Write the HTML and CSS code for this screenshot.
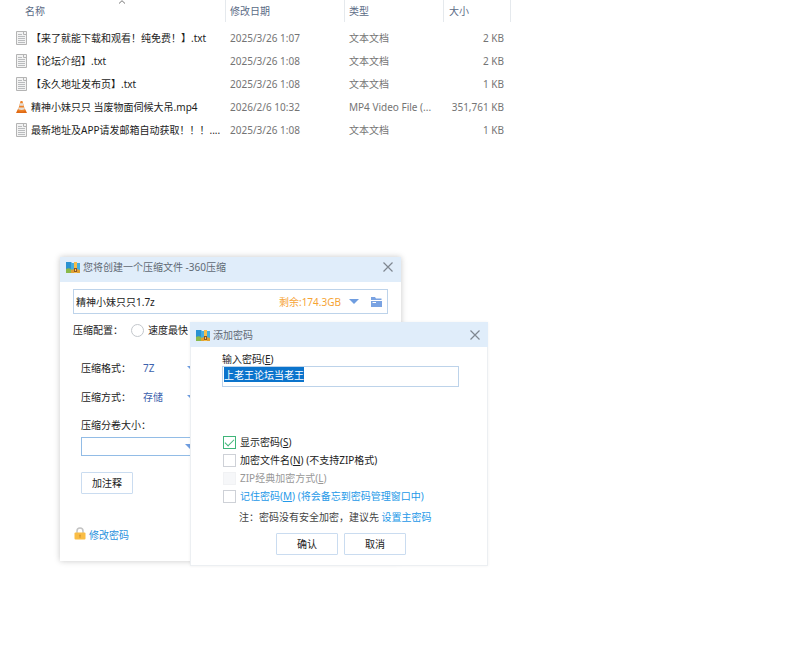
FILE: index.html
```html
<!DOCTYPE html>
<html lang="zh-CN">
<head>
<meta charset="utf-8">
<meta name="viewport" content="width=device-width, initial-scale=1">
<title>360压缩</title>
<link rel="stylesheet" href="styles.css">
</head>
<body>
<svg class="defs" aria-hidden="true">
  <symbol id="doc" viewBox="0 0 11 14">
    <path d="M.5 .5H10.500V13.500H.5Z" fill="#f3f3f3" stroke="#b4b4b4"/>
    <path d="M7.500 .5V3.500H10.500" fill="none" stroke="#b4b4b4"/>
    <path d="M2 3.500H6M2 5.500H9M2 7.500H9M2 9.500H9M2 11.500H9" stroke="#b9bbbd"/>
  </symbol>
  <symbol id="cone" viewBox="0 0 12 14">
    <path d="M2 9.500H10L12 13.500H0Z" fill="#e06a14"/>
    <path d="M5 .5H7L10 11Q6 13 2 11Z" fill="#ee8228"/>
    <path d="M4.400 3H7.600L8.300 5.500H3.700ZM3 7.500H9L9.500 9.500Q6 11 2.500 9.500Z" fill="#e3dfda"/>
  </symbol>
  <symbol id="zip" viewBox="0 0 14 12">
    <path d="M0 1H5L6 2H9V12H0Z" fill="#2a92d2"/>
    <path d="M0 8Q3 6 7 9V12H0Z" fill="#8ab94a"/>
    <path d="M5 2H14V12H5Z" fill="#45aee0"/>
    <path d="M5 9Q9 7 14 9V12H5Z" fill="#e0a132"/>
    <path d="M8 1H11V12H8Z" fill="#f5bd4a"/>
    <path d="M8 7H11V11H8Z" fill="#8e5424"/>
    <path d="M9 8H10V10H9Z" fill="#f3cf70"/>
  </symbol>
  <symbol id="close" viewBox="0 0 10 10">
    <path d="M.5 .5L9.500 9.500M9.500 .5L.5 9.500" fill="none" stroke="#7f8790" stroke-width="1.200"/>
  </symbol>
</svg>

<main class="desktop">
  <table class="files">
    <colgroup><col class="c-name"><col class="c-date"><col class="c-type"><col class="c-size"></colgroup>
    <thead>
      <tr>
        <th class="sorted">名称<svg class="sort" viewBox="0 0 8 4"><path d="M1 3.500L4 .7L7 3.500" fill="none" stroke="#777"/></svg></th>
        <th>修改日期</th><th>类型</th><th>大小</th>
      </tr>
    </thead>
    <tbody>
      <tr><td><span class="file"><svg><use href="#doc"/></svg>【来了就能下载和观看！纯免费！】.txt</span></td><td>2025/3/26 1:07</td><td>文本文档</td><td>2 KB</td></tr>
      <tr><td><span class="file"><svg><use href="#doc"/></svg>【论坛介绍】.txt</span></td><td>2025/3/26 1:08</td><td>文本文档</td><td>2 KB</td></tr>
      <tr><td><span class="file"><svg><use href="#doc"/></svg>【永久地址发布页】.txt</span></td><td>2025/3/26 1:08</td><td>文本文档</td><td>1 KB</td></tr>
      <tr><td><span class="file"><svg><use href="#cone"/></svg>精神小妹只只 当废物面伺候大吊.mp4</span></td><td>2026/2/6 10:32</td><td>MP4 Video File (...</td><td>351,761 KB</td></tr>
      <tr><td><span class="file"><svg><use href="#doc"/></svg>最新地址及APP请发邮箱自动获取！！！....</span></td><td>2025/3/26 1:08</td><td>文本文档</td><td>1 KB</td></tr>
    </tbody>
  </table>

  <section class="window archive">
    <header class="titlebar">
      <svg class="app"><use href="#zip"/></svg>
      <h1>您将创建一个压缩文件 -360压缩</h1>
      <button class="close" type="button" aria-label="关闭"><svg><use href="#close"/></svg></button>
    </header>
    <form class="archive-form">
      <div class="path">
        <input type="text" value="精神小妹只只1.7z" aria-label="文件名">
        <span class="free">剩余:174.3GB</span>
        <button type="button" aria-label="历史路径"><i class="arrow"></i></button>
        <button type="button" aria-label="浏览">
          <svg class="folder" viewBox="0 0 11 10"><path d="M0 0H4L5 1.500H10.500V3H0Z" fill="#7aa3e2"/><path d="M0 4H11V10H0Z" fill="#7aa3e2"/><path d="M1.500 5.500H5" stroke="#fff"/></svg>
        </button>
      </div>
      <div class="config">
        <span>压缩配置：</span>
        <label><input type="radio" name="mode">速度最快</label>
      </div>
      <div class="options">
        <div class="pick"><label for="format">压缩格式：</label><span class="drop"><select id="format"><option>7Z</option></select><i class="arrow"></i></span></div>
        <div class="pick"><label for="method">压缩方式：</label><span class="drop"><select id="method"><option>存储</option></select><i class="arrow"></i></span></div>
        <label class="volume-label" for="volume">压缩分卷大小：</label>
        <span class="drop volume"><select id="volume"><option></option></select><i class="arrow"></i></span>
        <button class="btn note-btn" type="button">加注释</button>
      </div>
      <a class="change" href="#">
        <svg viewBox="0 0 12 13"><path d="M3 7V4a3 3 0 0 1 6 0V7" fill="none" stroke="#c3c3c3" stroke-width="1.500"/><rect x=".5" y="5.500" width="11" height="7" rx="1" fill="#fabd45"/><circle cx="6" cy="8.500" r="1" fill="#d99a35"/><path d="M6 9V11" stroke="#d99a35"/></svg>
        修改密码
      </a>
    </form>
  </section>

  <section class="window password">
    <header class="titlebar">
      <svg class="app"><use href="#zip"/></svg>
      <h2>添加密码</h2>
      <button class="close" type="button" aria-label="关闭"><svg><use href="#close"/></svg></button>
    </header>
    <form class="password-form">
      <label class="pw-label" for="pw">输入密码(<u>E</u>)</label>
      <input class="pw" id="pw" type="text" value="上老王论坛当老王">
      <div class="checks">
        <label><input type="checkbox" checked><span>显示密码(<u>S</u>)</span></label>
        <label><input type="checkbox"><span>加密文件名(<u>N</u>) (不支持ZIP格式)</span></label>
        <label class="off"><input type="checkbox" disabled><span>ZIP经典加密方式(<u>L</u>)</span></label>
        <label class="blue"><input type="checkbox"><span>记住密码(<u>M</u>) (将会备忘到密码管理窗口中)</span></label>
      </div>
      <p class="hint">注：密码没有安全加密，建议先 <a href="#">设置主密码</a></p>
      <div class="actions"><button class="btn" type="button">确认</button><button class="btn" type="button">取消</button></div>
    </form>
  </section>
</main>
<script src="script.js"></script>
</body>
</html>
```
FILE: styles.css
```css
* { box-sizing: border-box; }

body {
  margin: 0;
  background: #fff;
  color: #222;
  font: 10px/16px "Noto Sans", "Noto Sans CJK SC", sans-serif;
}

button, input, select { margin: 0; color: inherit; font: inherit; }
button { padding: 0; border: 0; background: none; }
h1, h2, p { margin: 0; font: inherit; }
a { text-decoration: none; }
svg { display: block; flex: none; }
.defs { position: absolute; width: 0; height: 0; }

.desktop { position: relative; min-height: 100vh; overflow: hidden; }

/* File list */
.files { width: 511px; table-layout: fixed; border-collapse: separate; border-spacing: 0; color: #747474; white-space: nowrap; }
.c-name { width: 226px; }
.c-date { width: 119px; }
.c-type { width: 99px; }
.files th { height: 22px; padding: 0 4px; border-right: 1px solid #e5e9ed; color: #5b6b86; font-weight: 400; text-align: left; }
.files th:last-child { padding-left: 5px; }
.files .sorted { position: relative; padding-left: 25px; }
.sort { position: absolute; top: 0; left: 118px; width: 8px; height: 4px; }
.files td { height: 23px; padding: 0 4px; }
.files tbody::before { content: ""; display: block; height: 4px; }
.files td:first-child { padding: 0 0 0 16px; color: #1c1c1c; }
.files td:last-child { padding-right: 7px; text-align: right; }
.file { display: flex; align-items: center; gap: 4px; }
.file svg { width: 11px; height: 14px; }

/* Windows */
.window { position: absolute; background: #fff; }
.archive { top: 257px; left: 60px; width: 341px; box-shadow: 0 0 6px rgba(0, 0, 0, .22); }
.password { top: 322px; left: 190px; width: 298px; border: solid #eceff2; border-width: 0 1px 1px; box-shadow: 0 0 3px rgba(0, 0, 0, .06); }
.titlebar { display: flex; align-items: center; gap: 3px; height: 25px; padding: 0 8px 0 6px; background: #e0edfa; color: #5f6974; }
.archive .titlebar { padding-bottom: 5px; }
.password .titlebar { margin: 0 -1px; }
.titlebar .app { width: 14px; height: 12px; }
.close { margin-left: auto; }
.close svg { width: 10px; height: 10px; }

.arrow { display: block; width: 10px; height: 5px; background: #6f9de0; clip-path: polygon(0 0, 100% 0, 50% 100%); }

.btn { height: 22px; border: 1px solid #cadcf0; border-radius: 1px; background: #fff; color: #222; }

/* Archive window */
.archive-form { padding: 7px 13px 18px; }
.path { display: flex; align-items: center; height: 25px; padding: 0 5px 0 2px; border: 1px solid #bdd3ea; }
.path input { flex: 1; min-width: 0; padding: 0; border: 0; outline: 0; }
.free { margin-right: 8px; color: #f6a436; }
.path button + button { margin-left: 12px; }
.folder { width: 11px; height: 10px; }
.config { display: flex; align-items: center; gap: 8px; height: 18px; margin-top: 7px; }
.config label { display: flex; align-items: center; gap: 4px; }
.config input { appearance: none; width: 13px; height: 13px; border: 1px solid #c3c7cc; border-radius: 50%; }
.options { display: flex; flex-direction: column; align-items: flex-start; padding: 0 8px; }
.pick { display: flex; align-items: center; gap: 12px; height: 20px; margin-top: 9px; }
.pick:first-child { margin-top: 19px; }
.drop { position: relative; width: 55px; }
.drop select { display: block; width: 100%; padding: 0; border: 0; appearance: none; background: none; color: #3c62ad; }
.drop .arrow { position: absolute; top: 6px; right: 1px; pointer-events: none; }
.volume-label { margin-top: 10px; }
.drop.volume { width: 117px; margin-top: 4px; }
.volume select { height: 19px; border: 1px solid #92bce6; border-radius: 0; }
.volume .arrow { top: 7px; right: 3px; }
.note-btn { width: 52px; margin-top: 16px; }
.change { display: flex; align-items: center; gap: 3px; width: max-content; margin-top: 33px; padding-left: 1px; color: #2991dd; }
.change svg { width: 12px; height: 13px; margin-bottom: 3px; }

/* Password window */
.password-form { padding: 5px 28px 10px 31px; }
.pw-label { display: block; line-height: 14px; }
.pw { display: block; width: 100%; height: 21px; padding: 0 1px 4px; border: 1px solid #bdd3ea; outline: 0; caret-color: transparent; }
.pw::selection { background: #0b74cc; color: #fff; }
.checks { display: grid; margin-top: 46px; padding-left: 1px; }
.checks label { display: flex; align-items: center; gap: 4px; height: 18px; }
.checks input { display: grid; place-items: center; appearance: none; width: 13px; height: 13px; border: 1px solid #ced1d7; }
.checks input:checked { border-color: #3fb579; }
.checks input:checked::before { content: ""; width: 8px; height: 4px; border: solid #3fb579; border-width: 0 0 1px 1px; transform: translateY(-1px) rotate(-45deg); }
.checks input:disabled { border-color: #f1f2f4; background: #f6f7f9; }
.off { color: #989898; }
.blue, .hint a { color: #2499e8; }
.hint { margin-top: 4px; padding-left: 17px; color: #444; }
.actions { display: flex; gap: 6px; margin-top: 8px; padding-left: 54px; }
.actions .btn { width: 62px; }
```
FILE: script.js
```js
// The password is selected as soon as the dialog opens.
const password = document.getElementById("pw");
password.focus();
password.select();
```
